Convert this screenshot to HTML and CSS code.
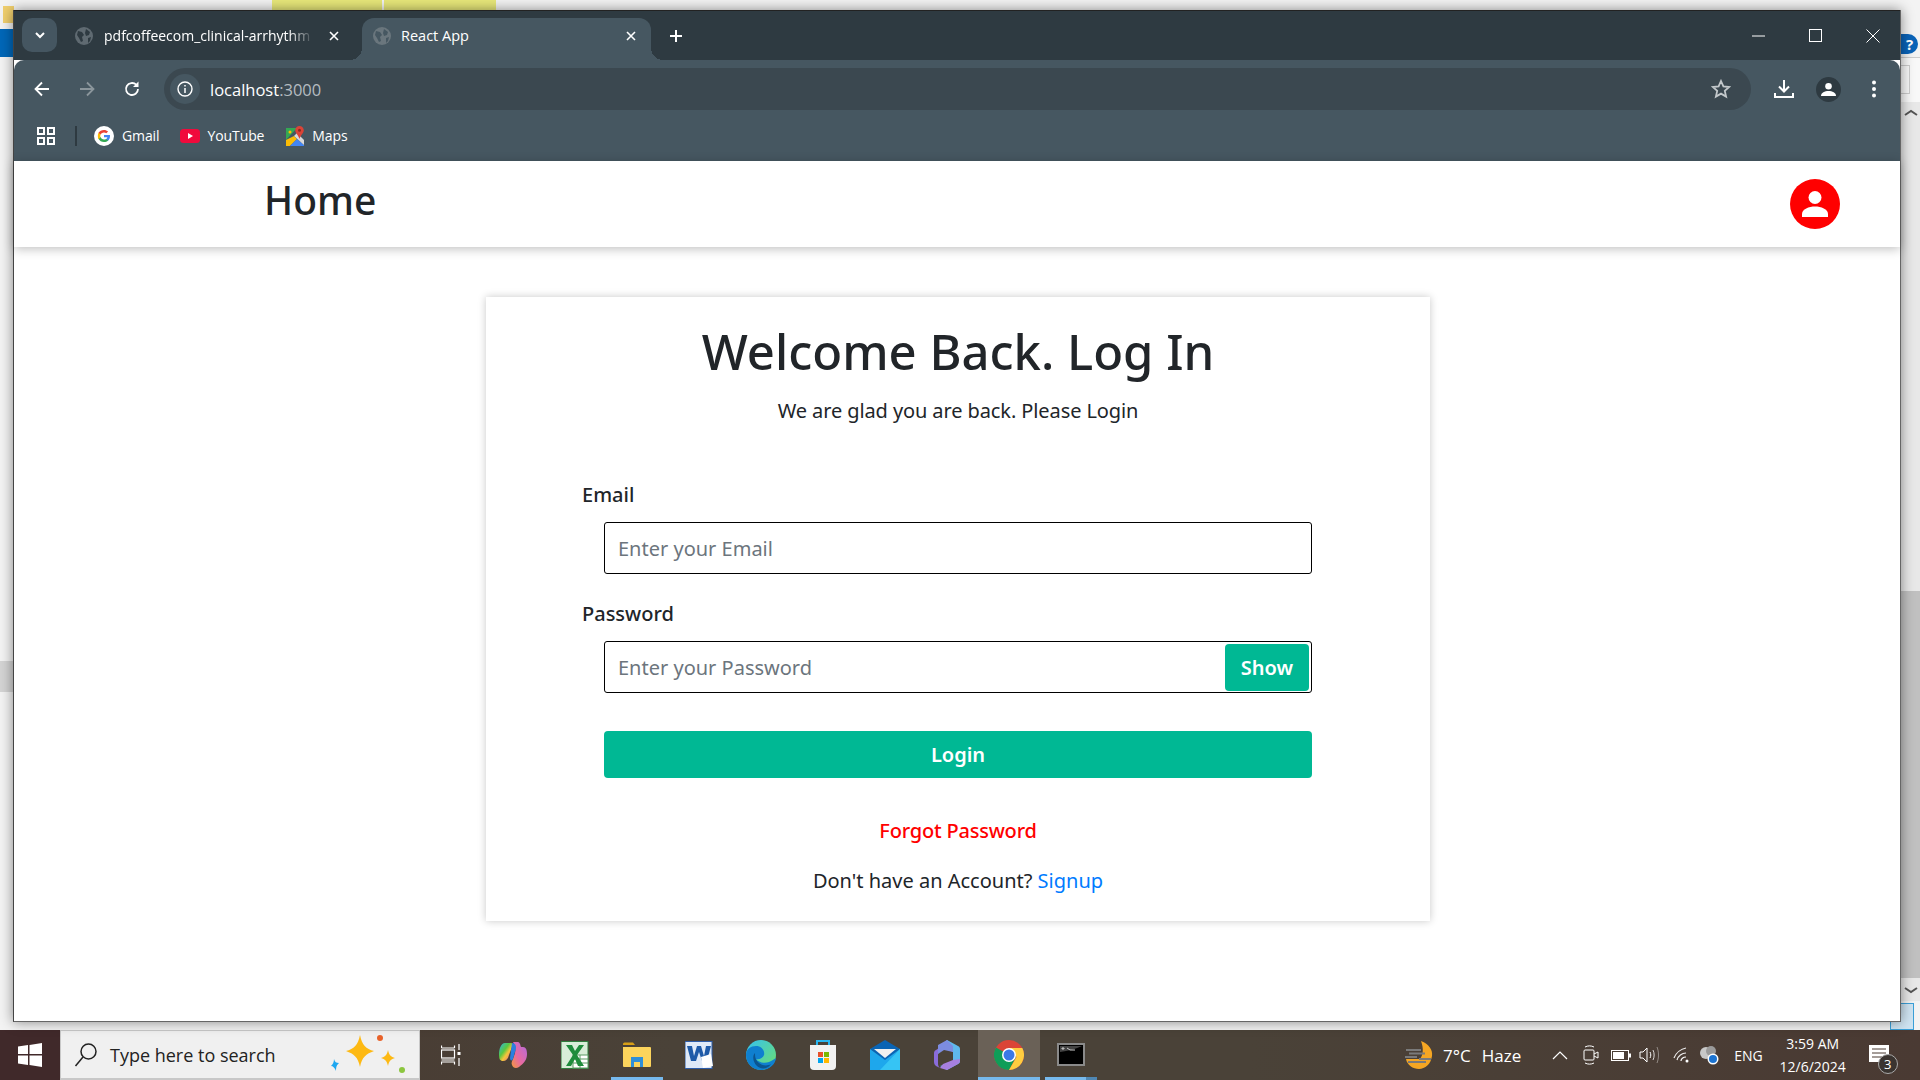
FILE: index.html
```html
<!DOCTYPE html>
<html lang="en">
<head>
    <meta charset="UTF-8">
    <title>React App</title>
    <link rel="stylesheet" href="styles.css">
</head>
<body>

    <div class="desktop">
        <!-- bits of the window behind -->
        <div class="back-tab back-tab-1"></div>
        <div class="back-tab back-tab-2"></div>
        <div class="back-blue"></div>
        <div class="back-folder"></div>
        <div class="back-grip"></div>
        <div class="back-help">?</div>
        <div class="back-box"></div>
        <div class="back-scroll">
            <svg width="16" height="10" viewBox="0 0 16 10"><path d="M2 7l6-4 6 4" fill="none" stroke="#555" stroke-width="2"/></svg>
            <div class="back-thumb"></div>
            <svg width="16" height="10" viewBox="0 0 16 10"><path d="M2 3l6 4 6-4" fill="none" stroke="#555" stroke-width="2"/></svg>
        </div>
        <div class="back-preview"></div>

        <div class="window">
            <div class="tabstrip">
                <div class="tab-menu">
                    <svg width="12" height="12" viewBox="0 0 12 12"><path d="M2 4l4 4 4-4" fill="none" stroke="#fff" stroke-width="2"/></svg>
                </div>
                <div class="tab">
                    <svg class="tab-globe" width="18" height="18" viewBox="0 0 18 18"><circle cx="9" cy="9" r="9" fill="#5f6a71"/><path d="M3 4l4 1 2 3-2 2 1 4-2 1-2-4-2-3zM11 2l4 3-1 3-3 1-1-3zM13 11l3-1-1 4-2 2z" fill="#2e3a41"/></svg>
                    <span class="tab-title">pdfcoffeecom_clinical-arrhythm</span>
                    <svg class="tab-x" width="10" height="10" viewBox="0 0 10 10"><path d="M1 1l8 8M9 1l-8 8" stroke="#fff" stroke-width="1.6"/></svg>
                </div>
                <div class="tab tab-active">
                    <svg class="tab-globe" width="18" height="18" viewBox="0 0 18 18"><circle cx="9" cy="9" r="9" fill="#6a767d"/><path d="M3 4l4 1 2 3-2 2 1 4-2 1-2-4-2-3zM11 2l4 3-1 3-3 1-1-3zM13 11l3-1-1 4-2 2z" fill="#465761"/></svg>
                    <span class="tab-title">React App</span>
                    <svg class="tab-x" width="10" height="10" viewBox="0 0 10 10"><path d="M1 1l8 8M9 1l-8 8" stroke="#fff" stroke-width="1.6"/></svg>
                </div>
                <svg class="tab-plus" width="14" height="14" viewBox="0 0 14 14"><path d="M7 1v12M1 7h12" stroke="#fff" stroke-width="2"/></svg>
                <div class="win-controls">
                    <svg width="14" height="14" viewBox="0 0 14 14"><path d="M0 7h13" stroke="#fff" stroke-width="1"/></svg>
                    <svg width="14" height="14" viewBox="0 0 14 14"><rect x=".5" y=".5" width="12" height="12" fill="none" stroke="#fff"/></svg>
                    <svg width="14" height="14" viewBox="0 0 14 14"><path d="M.5.5l13 13M13.500.5l-13 13" stroke="#fff" stroke-width="1"/></svg>
                </div>
            </div>

            <div class="toolbar">
                <div class="nav-btns">
                    <svg width="18" height="18" viewBox="0 0 18 18"><path d="M16 9H3M9 2.500L2.500 9 9 15.500" fill="none" stroke="#fff" stroke-width="1.800"/></svg>
                    <svg width="18" height="18" viewBox="0 0 18 18"><path d="M2 9h13M9 2.500L15.500 9 9 15.500" fill="none" stroke="#8b969c" stroke-width="1.800"/></svg>
                    <svg width="18" height="18" viewBox="0 0 18 18"><path d="M15 9a6 6 0 1 1-1.800-4.300" fill="none" stroke="#fff" stroke-width="1.800"/><path d="M15.500 1.500v5.500h-5.500z" fill="#fff"/></svg>
                </div>
                <div class="omnibox">
                    <div class="site-info">
                        <svg width="16" height="16" viewBox="0 0 16 16"><circle cx="8" cy="8" r="7" fill="none" stroke="#fff" stroke-width="1.400"/><path d="M8 7v5M8 4v1.600" stroke="#fff" stroke-width="1.500"/></svg>
                    </div>
                    <span class="url">localhost<span class="url-port">:3000</span></span>
                    <svg class="star" width="20" height="20" viewBox="0 0 20 20"><path d="M10 2l2.400 5.400 5.800.6-4.400 3.900 1.300 5.700L10 14.600l-5.100 3 1.300-5.700L1.800 8l5.800-.6z" fill="none" stroke="#c3c8cb" stroke-width="1.800"/></svg>
                </div>
                <div class="tool-btns">
                    <svg width="20" height="20" viewBox="0 0 20 20"><path d="M10 1v11M5 7.500l5 5 5-5" fill="none" stroke="#fff" stroke-width="2"/><path d="M1 14v4h18v-4" fill="none" stroke="#fff" stroke-width="2"/></svg>
                    <div class="profile-chip">
                        <svg width="16" height="16" viewBox="0 0 16 16"><circle cx="8" cy="4.500" r="3.500" fill="#fff"/><path d="M0 15c0-4 4-5.500 8-5.500s8 1.500 8 5.500z" fill="#fff"/></svg>
                    </div>
                    <svg width="6" height="18" viewBox="0 0 6 18"><circle cx="3" cy="2.500" r="2" fill="#fff"/><circle cx="3" cy="9" r="2" fill="#fff"/><circle cx="3" cy="15.500" r="2" fill="#fff"/></svg>
                </div>
            </div>

            <div class="bookmarks">
                <svg class="apps-icon" width="18" height="18" viewBox="0 0 18 18"><g fill="none" stroke="#fff" stroke-width="2"><rect x="1" y="1" width="6" height="6"/><rect x="11" y="1" width="6" height="6"/><rect x="1" y="11" width="6" height="6"/><rect x="11" y="11" width="6" height="6"/></g></svg>
                <div class="bm-sep"></div>
                <div class="bm bm-gmail">
                    <svg width="20" height="20" viewBox="0 0 20 20"><circle cx="10" cy="10" r="10" fill="#fff"/><path d="M16 10.200c0-.5 0-.9-.1-1.300H10v2.400h3.400c-.2.800-.6 1.400-1.300 1.900v1.500h2c1.200-1.100 1.900-2.600 1.900-4.500z" fill="#4285f4"/><path d="M10 16c1.700 0 3-.5 4.100-1.500l-2-1.500c-.6.400-1.300.6-2.100.6-1.600 0-3-1.100-3.500-2.500h-2v1.600C5.500 14.700 7.600 16 10 16z" fill="#34a853"/><path d="M6.500 11.600c-.3-.8-.3-1.600 0-3.300V6.800h-2c-.9 1.900-.9 4.500 0 6.400z" fill="#fbbc05"/><path d="M10 6.400c.9 0 1.700.3 2.300.9l1.800-1.800C13 4.600 11.600 4 10 4 7.600 4 5.500 5.300 4.500 6.800l2 1.600C7 7.500 8.400 6.400 10 6.400z" fill="#ea4335"/></svg>
                    <span>Gmail</span>
                </div>
                <div class="bm bm-youtube">
                    <svg width="20" height="14" viewBox="0 0 20 14"><rect width="20" height="14" rx="3.500" fill="#f00a3c"/><path d="M8 4l5 3-5 3z" fill="#fff"/></svg>
                    <span>YouTube</span>
                </div>
                <div class="bm bm-maps">
                    <svg width="18" height="20" viewBox="0 0 18 20"><path d="M0 2h11L0 14z" fill="#34a853"/><path d="M0 14v6h4l7-7-3-3z" fill="#fbbc05"/><path d="M4 20h14v-1l-7-6z" fill="#4285f4"/><path d="M8 10l3-3 7 7v5z" fill="#d9d9d9"/><circle cx="4" cy="6" r="1.500" fill="#fbbc05"/><path d="M13.500 0a4.300 4.300 0 0 1 4.300 4.300c0 3-3.300 5-4.300 8.700-1-3.700-4.300-5.700-4.300-8.700A4.300 4.300 0 0 1 13.500 0z" fill="#db4437"/><circle cx="13.500" cy="4.300" r="1.500" fill="#8e2a20"/></svg>
                    <span>Maps</span>
                </div>
            </div>

            <div class="page">
                <header class="topbar">
                    <h2 class="brand">Home</h2>
                    <div class="user-btn">
                        <svg width="30" height="26" viewBox="0 0 30 26"><circle cx="15" cy="6.500" r="6.500" fill="#fff"/><path d="M2 26v-3c0-5 7-7.500 13-7.500s13 2.500 13 7.500v3z" fill="#fff"/></svg>
                    </div>
                </header>

                <div class="card">
                    <h1>Welcome Back. Log In</h1>
                    <p class="sub">We are glad you are back. Please Login</p>

                    <label class="field-label">Email</label>
                    <div class="field">
                        <span class="placeholder">Enter your Email</span>
                    </div>

                    <label class="field-label label-pass">Password</label>
                    <div class="field">
                        <span class="placeholder">Enter your Password</span>
                        <button class="show-btn">Show</button>
                    </div>

                    <button class="login-btn">Login</button>

                    <a class="forgot">Forgot Password</a>
                    <p class="signup">Don't have an Account? <a>Signup</a></p>
                </div>
            </div>
        </div>
    </div>

    <div class="taskbar">
        <div class="start">
            <svg width="24" height="24" viewBox="0 0 24 24"><path d="M0 3.500l10-1.400V11H0zM11.500 1.900L24 0v11H11.500zM0 12.500h10v9.400L0 20.500zM11.500 12.500H24V24l-12.500-1.900z" fill="#fff"/></svg>
        </div>
        <div class="search">
            <svg width="24" height="26" viewBox="0 0 24 26"><circle cx="14.500" cy="9.500" r="7.500" fill="none" stroke="#222" stroke-width="1.500"/><path d="M9 15L1.500 24" stroke="#222" stroke-width="1.500"/></svg>
            <span class="search-text">Type here to search</span>
            <svg class="sparkles" width="80" height="44" viewBox="0 0 80 44"><path d="M32 2c2 10 6 14 14 16-8 3-12 6-14 16-2-10-6-13-14-16 8-2 12-6 14-16z" fill="#fdb913"/><path d="M60 17c1 5 3 7 7 8-4 1-6 3-7 8-1-5-3-7-7-8 4-1 6-3 7-8z" fill="#fdb913"/><path d="M6 26c1 3 2 4 5 4-2 2-3 3-3 8-1-3-3-5-5-5 2-2 3-4 3-7z" fill="#1ea7f0"/><circle cx="52" cy="5" r="3" fill="#e8622a"/><circle cx="74" cy="37" r="3" fill="#8cc63f"/></svg>
        </div>

        <div class="tb-btn">
            <svg width="20" height="24" viewBox="0 0 20 24" fill="none" stroke="#fff" stroke-width="1.200"><path d="M.5 5h13M.5 17h13M.5 21.500V19H13.500v2.500M.5 2.500V5M13.500 2.500V5"/><rect x=".5" y="7" width="13" height="8"/><path d="M18 1v6M18 15v8"/><rect x="16.500" y="9" width="3" height="3" fill="#fff" stroke="none"/></svg>
        </div>
        <div class="tb-btn">
            <svg width="30" height="30" viewBox="0 0 30 30"><defs><linearGradient id="cop" x1="0" y1="0" x2="1" y2="1"><stop offset="0" stop-color="#2fb5e8"/><stop offset=".4" stop-color="#58c83f"/><stop offset=".6" stop-color="#f5c63a"/><stop offset="1" stop-color="#e0559a"/></linearGradient><linearGradient id="cop2" x1="1" y1="0" x2="0" y2="1"><stop offset="0" stop-color="#b06be0"/><stop offset=".6" stop-color="#e86aa0"/><stop offset="1" stop-color="#f59a3a"/></linearGradient></defs><path d="M7 3c-4 0-6 6-6 11s1 7 4 7 5-2 6-6l3-8c1-3 0-4-1-4z" fill="url(#cop)"/><path d="M15 2h4c3 0 3 2 4 5h2c3 0 4 3 4 7 0 6-3 9-8 13-3 2-6 1-7-2-1-2 0-4 1-6l2-6c1-4 0-8-2-11z" fill="url(#cop2)"/><path d="M14 3c4 0 5 4 3 9l-2 7c-1 2-3 2-3-1l1-8z" fill="#2b7fe0"/></svg>
        </div>
        <div class="tb-btn">
            <svg width="28" height="28" viewBox="0 0 28 28"><rect width="27" height="27" y=".5" fill="#d8edd8" stroke="#2e7d3c"/><rect x="12" y="14" width="15" height="13" fill="#fff" stroke="#5a9a64"/><path d="M12 18h15M12 22h15M19 14v13" stroke="#5a9a64"/><path d="M5 4h6l3 6 4-6h5l-7 10 7 11h-6l-3-7-4 7H5l7-11z" fill="#1e8c3c"/></svg>
        </div>
        <div class="tb-btn tb-open">
            <svg width="28" height="26" viewBox="0 0 28 26"><path d="M0 2a1.500 1.500 0 0 1 1.500-1.500H10l2 2.500H0z" fill="#d89f16"/><path d="M0 5h27a1 1 0 0 1 1 1v18a1 1 0 0 1-1 1H1a1 1 0 0 1-1-1z" fill="#fcd45c"/><path d="M8 25V15h12v10h-3v-5h-6v5z" fill="#2f8fd8"/></svg>
        </div>
        <div class="tb-btn">
            <svg width="28" height="28" viewBox="0 0 28 28"><rect width="27" height="27" y=".5" fill="#dfe9f7" stroke="#2d5ca8"/><path d="M2 5h5l2 10 3-10h4l3 10 2-10h5l-4 15h-5l-3-9-3 9H6z" fill="#1e5aa8"/><path d="M16 16l10-3 2 12-10 2z" fill="#fff"/></svg>
        </div>
        <div class="tb-btn">
            <svg width="30" height="30" viewBox="0 0 30 30"><defs><linearGradient id="edge" x1="0" y1="0" x2="1" y2="1"><stop offset="0" stop-color="#35c1f1"/><stop offset="1" stop-color="#6ee06a"/></linearGradient></defs><circle cx="15" cy="15" r="15" fill="url(#edge)"/><path d="M30 18c-1 7-7 12-15 12C6 30 0 23 0 15c0-6 5-9 10-9 6 0 9 5 8 9-1 3-5 5-8 4 2 3 8 5 13 3 3-1 5-3 7-4z" fill="#0f7fcf"/><path d="M9 13c-3 3-2 9 2 13 2 2 6 3 9 2 2-1 4-2 5-4-5 3-11 1-14-3-2-3-2-5-2-8z" fill="#0b558f"/></svg>
        </div>
        <div class="tb-btn">
            <svg width="26" height="30" viewBox="0 0 26 30"><path d="M7 6V1h12v5" fill="none" stroke="#29b6f0" stroke-width="2"/><path d="M0 5h26v21a4 4 0 0 1-4 4H4a4 4 0 0 1-4-4z" fill="#f2f2f2"/><rect x="8" y="12" width="5" height="5" fill="#e8512a"/><rect x="14" y="12" width="5" height="5" fill="#7ab800"/><rect x="8" y="18" width="5" height="5" fill="#00a4ef"/><rect x="14" y="18" width="5" height="5" fill="#ffb900"/></svg>
        </div>
        <div class="tb-btn">
            <svg width="30" height="30" viewBox="0 0 30 30"><path d="M0 9L15 0l15 9-15 12z" fill="#0a64b4"/><path d="M4 9h22l-11 9z" fill="#f0f0f0"/><path d="M0 9l15 11L30 9v21H0z" fill="#1ea7ec"/><path d="M30 9v21H10z" fill="#36c4f4"/></svg>
        </div>
        <div class="tb-btn">
            <svg width="26" height="30" viewBox="0 0 26 30"><path d="M13 0l11 6c2 1 2 2 2 4v10c0 2 0 3-2 4l-11 6-7-4 13-4V12L8 6z" fill="#5fb8ec"/><path d="M8 6L2 10C0 11 0 12 0 14v8c0 2 1 3 2 4l4 2c-2-2-2-3-2-5v-9z" fill="#8a6cdb"/><path d="M6 28l7 2 11-6c2-1 2-3 2-5l-7 1-10 4z" fill="#a77fe0"/><path d="M13 0L4 5v9l6-4 9 2V6z" fill="#7c8ce0"/></svg>
        </div>
        <div class="tb-btn tb-active">
            <svg width="30" height="30" viewBox="0 0 30 30"><circle cx="15" cy="15" r="15" fill="#db4437"/><path d="M15 15L2 7.500A15 15 0 0 0 15 30l7-13z" fill="#0f9d58"/><path d="M15 8h13.300A15 15 0 0 1 15 30l7.500-13z" fill="#ffcd40"/><circle cx="15" cy="15" r="7" fill="#fff"/><circle cx="15" cy="15" r="5.500" fill="#3b78e7"/></svg>
        </div>
        <div class="tb-btn tb-open tb-multi">
            <svg width="28" height="24" viewBox="0 0 28 24"><rect x="1" y="1" width="26" height="21" fill="#000" stroke="#8a8a8a" stroke-width="2"/><path d="M3 9c8-1 16-3 22-6H3z" fill="#444"/><path d="M5 5h2v1H5zM10 5l3 2h5" stroke="#ccc" fill="none"/></svg>
        </div>

        <div class="tray">
            <svg class="tray-weather" width="28" height="28" viewBox="0 0 28 28"><path d="M16 0c8 3 12 9 11 15-1 8-7 13-13 13S2 24 1 18h14c3-4 4-10 1-18z" fill="#f5a623"/><path d="M1 9h15M4 12.500h16M0 16h12M14 18h12M3 21h18" stroke="#7a7a7a" stroke-width="2"/></svg>
            <span class="tray-text tray-temp">7°C</span>
            <span class="tray-text tray-haze">Haze</span>
            <svg class="tray-chev" width="16" height="9" viewBox="0 0 16 9"><path d="M1 8l7-7 7 7" fill="none" stroke="#fff" stroke-width="1.200"/></svg>
            <svg class="tray-cam" width="16" height="20" viewBox="0 0 16 20" fill="none" stroke="#fff"><path d="M2 2c3-1.500 6-1.500 9 0M2 18c3 1.500 6 1.500 9 0"/><rect x="1" y="5" width="10" height="10" rx="1"/><path d="M11 9l4-2v6l-4-2"/></svg>
            <svg class="tray-batt" width="20" height="11" viewBox="0 0 20 11"><rect x=".5" y=".5" width="17" height="10" fill="none" stroke="#fff"/><rect x="2" y="2" width="11" height="7" fill="#fff"/><rect x="18" y="3.500" width="2" height="4" fill="#fff"/></svg>
            <svg class="tray-vol" width="20" height="18" viewBox="0 0 20 18" fill="none" stroke="#fff"><path d="M1 6h3l4-4v14l-4-4H1z"/><path d="M11 6c1 2 1 4 0 6"/><path d="M14 4c1.500 3 1.500 7 0 10" opacity=".8"/><path d="M18 1c2 5 2 11 0 16" opacity=".4"/></svg>
            <svg class="tray-wifi" width="18" height="18" viewBox="0 0 18 18" fill="none" stroke="#fff" stroke-width="1.200"><path d="M1 12c2-5 7-9 12-10" opacity=".9"/><path d="M4 14c1-4 5-7 9-7" opacity=".9"/><path d="M8 15c0-2 2-4 5-4"/><circle cx="14" cy="15" r="1.500" fill="#fff" stroke="none"/></svg>
            <svg class="tray-cloud" width="20" height="20" viewBox="0 0 20 20"><circle cx="7" cy="8" r="6" fill="#c8c8c8"/><circle cx="12" cy="6" r="5" fill="#9a9a9a"/><circle cx="14" cy="14" r="5.500" fill="#fff"/><circle cx="14" cy="14" r="4" fill="#1c74d2"/></svg>
            <span class="tray-text tray-eng">ENG</span>
            <div class="clock">
                <div>3:59 AM</div>
                <div>12/6/2024</div>
            </div>
            <div class="notif">
                <svg width="20" height="18" viewBox="0 0 20 18"><path d="M0 0h20v17H0z" fill="#fff"/><path d="M3 4h14M3 8h14M3 12h10" stroke="#4a3a33" stroke-width="1"/></svg>
                <span class="notif-badge">3</span>
            </div>
        </div>
    </div>

</body>
</html>
```

FILE: styles.css
```css
* {
    box-sizing: border-box;
}
body {
    margin: 0;
    width: 1920px;
    height: 1080px;
    overflow: hidden;
    display: flex;
    flex-direction: column;
    background: #f0f0f0;
    font-family: "Noto Sans", sans-serif;
}
.desktop {
    position: relative;
    flex: 1;
    background: #f3f3f3;
}

/* things showing behind the browser */
.back-tab {
    position: absolute;
    top: 0;
    height: 10px;
    background: #e8e87a;
}
.back-tab-1 {
    left: 272px;
    width: 110px;
}
.back-tab-2 {
    left: 384px;
    width: 112px;
}
.back-blue {
    position: absolute;
    left: 0;
    top: 29px;
    width: 14px;
    height: 28px;
    background: #0067b8;
}
.back-folder {
    position: absolute;
    left: 3px;
    top: 6px;
    width: 11px;
    height: 17px;
    background: #f0cf6e;
}
.back-grip {
    position: absolute;
    left: 0;
    top: 661px;
    width: 14px;
    height: 31px;
    background: #d4d4d4;
}
.back-help {
    position: absolute;
    left: 1901px;
    top: 34px;
    width: 17px;
    height: 20px;
    border-radius: 0 10px 10px 0;
    background: #0a63b8;
    color: #fff;
    font-size: 15px;
    font-weight: 700;
    line-height: 20px;
    text-align: center;
}
.back-box {
    position: absolute;
    left: 1896px;
    top: 57px;
    width: 24px;
    height: 45px;
    border-top: 1px solid #ccc;
    background: #f8f8f8;
}
.back-box::after {
    content: "";
    position: absolute;
    left: 0;
    top: 7px;
    width: 12px;
    height: 27px;
    border: 1px solid #ccc;
}
.back-scroll {
    position: absolute;
    left: 1901px;
    top: 102px;
    width: 19px;
    height: 899px;
    background: #e8e8e8;
    display: flex;
    flex-direction: column;
    align-items: center;
    padding: 6px 0;
}
.back-thumb {
    width: 19px;
    height: 387px;
    margin-top: 473px;
    margin-bottom: auto;
    background: #c0c0c0;
}
.back-preview {
    position: absolute;
    left: 1890px;
    top: 1003px;
    width: 24px;
    height: 27px;
    background: #cfe4f2;
    border: 1px solid #3ba0d8;
}

.window {
    position: absolute;
    left: 13px;
    top: 10px;
    width: 1888px;
    height: 1012px;
    display: flex;
    flex-direction: column;
    background: #fff;
    border-right: 1px solid #666;
    border-bottom: 1px solid #666;
    border-left: 1px solid #444;
    box-shadow: 0 0 12px rgba(0, 0, 0, 0.45);
    font-family: "Open Sans", sans-serif;
}

/* tab strip */
.tabstrip {
    height: 50px;
    background: #2e3a41;
    display: flex;
    align-items: flex-end;
    border-top: 1px solid #222;
    padding-left: 8px;
}
.tab-menu {
    width: 35px;
    height: 34px;
    margin-bottom: 8px;
    background: #455661;
    border-radius: 10px;
    display: flex;
    align-items: center;
    justify-content: center;
}
.tab {
    position: relative;
    width: 305px;
    height: 42px;
    display: flex;
    align-items: center;
    padding: 0 0 7px 18px;
    color: #fff;
    font-size: 14px;
}
.tab-active {
    width: 289px;
    padding-left: 11px;
    background: #465761;
    border-radius: 12px 12px 0 0;
}
.tab-active::before,
.tab-active::after {
    content: "";
    position: absolute;
    bottom: 0;
    width: 12px;
    height: 12px;
}
.tab-active::before {
    left: -12px;
    background: radial-gradient(circle at 0 0, transparent 12px, #465761 12px);
}
.tab-active::after {
    right: -12px;
    background: radial-gradient(circle at 100% 0, transparent 12px, #465761 12px);
}
.tab-globe {
    flex: none;
}
.tab-title {
    width: 210px;
    margin-left: 11px;
    overflow: hidden;
    white-space: nowrap;
    -webkit-mask-image: linear-gradient(to right, #000 88%, transparent);
    mask-image: linear-gradient(to right, #000 88%, transparent);
}
.tab-active .tab-title {
    width: 210px;
    margin-left: 10px;
    font-size: 14.5px;
    -webkit-mask-image: none;
    mask-image: none;
}
.tab-x {
    margin-left: 15px;
}
.tab-plus {
    margin: 0 0 17px 18px;
    align-self: flex-end;
}
.win-controls {
    margin-left: auto;
    display: flex;
    gap: 43px;
    align-self: center;
    padding-right: 20px;
}

/* toolbar */
.toolbar {
    height: 50px;
    background: #465761;
    display: flex;
    align-items: flex-end;
    padding-left: 19px;
    border-radius: 10px 10px 0 0;
}
.nav-btns {
    display: flex;
    gap: 27px;
    height: 42px;
    align-items: center;
}
.omnibox {
    margin-left: 23px;
    width: 1587px;
    height: 42px;
    background: #3b4850;
    border-radius: 21px;
    display: flex;
    align-items: center;
    padding: 0 20px 0 6px;
}
.site-info {
    width: 30px;
    height: 30px;
    border-radius: 50%;
    background: #465761;
    display: flex;
    align-items: center;
    justify-content: center;
}
.url {
    margin-left: 10px;
    color: #fff;
    font-size: 16.5px;
}
.url-port {
    color: #b5bcc0;
}
.star {
    margin-left: auto;
}
.tool-btns {
    display: flex;
    align-items: center;
    height: 42px;
    padding-left: 23px;
}
.profile-chip {
    width: 25px;
    height: 25px;
    margin-left: 22px;
    border-radius: 50%;
    background: #2e3a41;
    display: flex;
    align-items: center;
    justify-content: center;
}
.profile-chip svg {
    width: 15px;
    height: 15px;
}
.tool-btns > svg:last-child {
    margin-left: 30px;
}

/* bookmarks */
.bookmarks {
    height: 51px;
    background: #465761;
    display: flex;
    align-items: center;
    padding-left: 23px;
    color: #fff;
    font-size: 14px;
    letter-spacing: -0.1px;
}
.bm-sep {
    width: 2px;
    height: 20px;
    margin-left: 20px;
    background: #2e3a41;
}
.bm {
    display: flex;
    align-items: center;
    gap: 8px;
}
.bm-gmail {
    margin-left: 17px;
}
.bm-youtube {
    margin-left: 20px;
}
.bm-maps {
    margin-left: 22px;
}

/* the react page */
.page {
    flex: 1;
    background: #fff;
    font-family: "Noto Sans", sans-serif;
    color: #212529;
}
.topbar {
    height: 86px;
    display: flex;
    align-items: center;
    justify-content: space-between;
    padding: 0 60px 0 250px;
    box-shadow: 0 2px 10px rgba(0, 0, 0, 0.25);
}
.brand {
    margin: 0 0 10px;
    font-size: 39px;
    font-weight: 500;
}
.user-btn {
    width: 50px;
    height: 50px;
    border-radius: 50%;
    background: #f00;
    display: flex;
    align-items: center;
    justify-content: center;
}
.card {
    width: 944px;
    height: 624px;
    margin: 50px 0 0 472px;
    padding: 19px 118px 0;
    box-shadow: 0 0 8px rgba(0, 0, 0, 0.22);
    text-align: center;
}
.card h1 {
    margin: 0;
    font-size: 49px;
    font-weight: 500;
    line-height: 70px;
}
.sub {
    margin: 5px 0 49px;
    font-size: 20px;
    letter-spacing: -0.1px;
    line-height: 40px;
}
.field-label {
    display: block;
    margin: 0 0 12px -22px;
    font-size: 20px;
    font-weight: 500;
    line-height: 30px;
    text-align: left;
}
.label-pass {
    margin-top: 25px;
}
.field {
    height: 52px;
    border: 1.5px solid #000;
    border-radius: 3px;
    display: flex;
    align-items: center;
    justify-content: space-between;
    padding: 0 2px 0 13px;
}
.placeholder {
    color: #6c757d;
    font-size: 20px;
}
.show-btn {
    width: 84px;
    height: 47px;
    background: #00b894;
    border: none;
    border-radius: 4px;
    color: #fff;
    font: 600 20px "Noto Sans", sans-serif;
}
.login-btn {
    display: block;
    width: 100%;
    height: 47px;
    margin-top: 38px;
    background: #00b894;
    border: none;
    border-radius: 4px;
    color: #fff;
    font: 600 20px "Noto Sans", sans-serif;
}
.forgot {
    display: block;
    margin-top: 38px;
    color: #f00;
    font-size: 20px;
    font-weight: 500;
    letter-spacing: -0.2px;
    line-height: 30px;
}
.signup {
    margin: 20px 0 0;
    font-size: 20px;
    line-height: 30px;
}
.signup a {
    color: #007bff;
}

/* windows taskbar */
.taskbar {
    height: 50px;
    flex: none;
    display: flex;
    background: linear-gradient(to right, #48372f 0%, #4a4238 35%, #4a4238 65%, #4a3a33 100%);
    color: #fff;
    font-family: "Open Sans", sans-serif;
}
.start {
    width: 60px;
    background: #40292a;
    display: flex;
    align-items: center;
    justify-content: center;
}
.search {
    width: 360px;
    background: #f0f0f0;
    border: 1px solid #c8c8c8;
    border-bottom-width: 2px;
    display: flex;
    align-items: center;
    padding-left: 13px;
    color: #222;
}
.search-text {
    margin-left: 12px;
    font-size: 18px;
}
.sparkles {
    margin-left: auto;
    margin-right: 11px;
}
.tb-btn {
    position: relative;
    width: 62px;
    display: flex;
    align-items: center;
    justify-content: center;
}
.tb-open::after {
    content: "";
    position: absolute;
    left: 5px;
    right: 5px;
    bottom: 0;
    height: 3px;
    background: #76b9ed;
}
.tb-active {
    background: #6a6157;
}
.tb-active::after {
    content: "";
    position: absolute;
    left: 0;
    right: 0;
    bottom: 0;
    height: 3px;
    background: #76b9ed;
}
.tb-multi::after {
    background: linear-gradient(to right, #76b9ed 78%, #4f87b3 78%);
}
.tray {
    flex: 1;
    display: flex;
    align-items: center;
    justify-content: flex-start;
    padding-left: 303px;
}
.tray-text {
    font-size: 17px;
}
.tray-temp {
    margin-left: 10px;
}
.tray-haze {
    margin-left: 11px;
}
.tray-chev {
    margin-left: 31px;
}
.tray-cam {
    margin-left: 15px;
}
.tray-batt {
    margin-left: 12px;
}
.tray-vol {
    margin-left: 8px;
}
.tray-wifi {
    margin-left: 14px;
}
.tray-cloud {
    margin-left: 8px;
}
.tray-eng {
    margin-left: 15px;
    font-size: 14px;
}
.clock {
    margin-left: 15px;
    width: 70px;
    text-align: center;
    font-size: 14px;
    line-height: 23px;
}
.notif {
    position: relative;
    margin-left: 21px;
    width: 30px;
    height: 30px;
}
.notif svg {
    display: block;
    margin-top: 5px;
}
.notif-badge {
    position: absolute;
    left: 9px;
    top: 14px;
    width: 20px;
    height: 20px;
    border: 1px solid #aaa;
    border-radius: 50%;
    background: #3a3430;
    font-size: 13px;
    line-height: 18px;
    text-align: center;
}
```
